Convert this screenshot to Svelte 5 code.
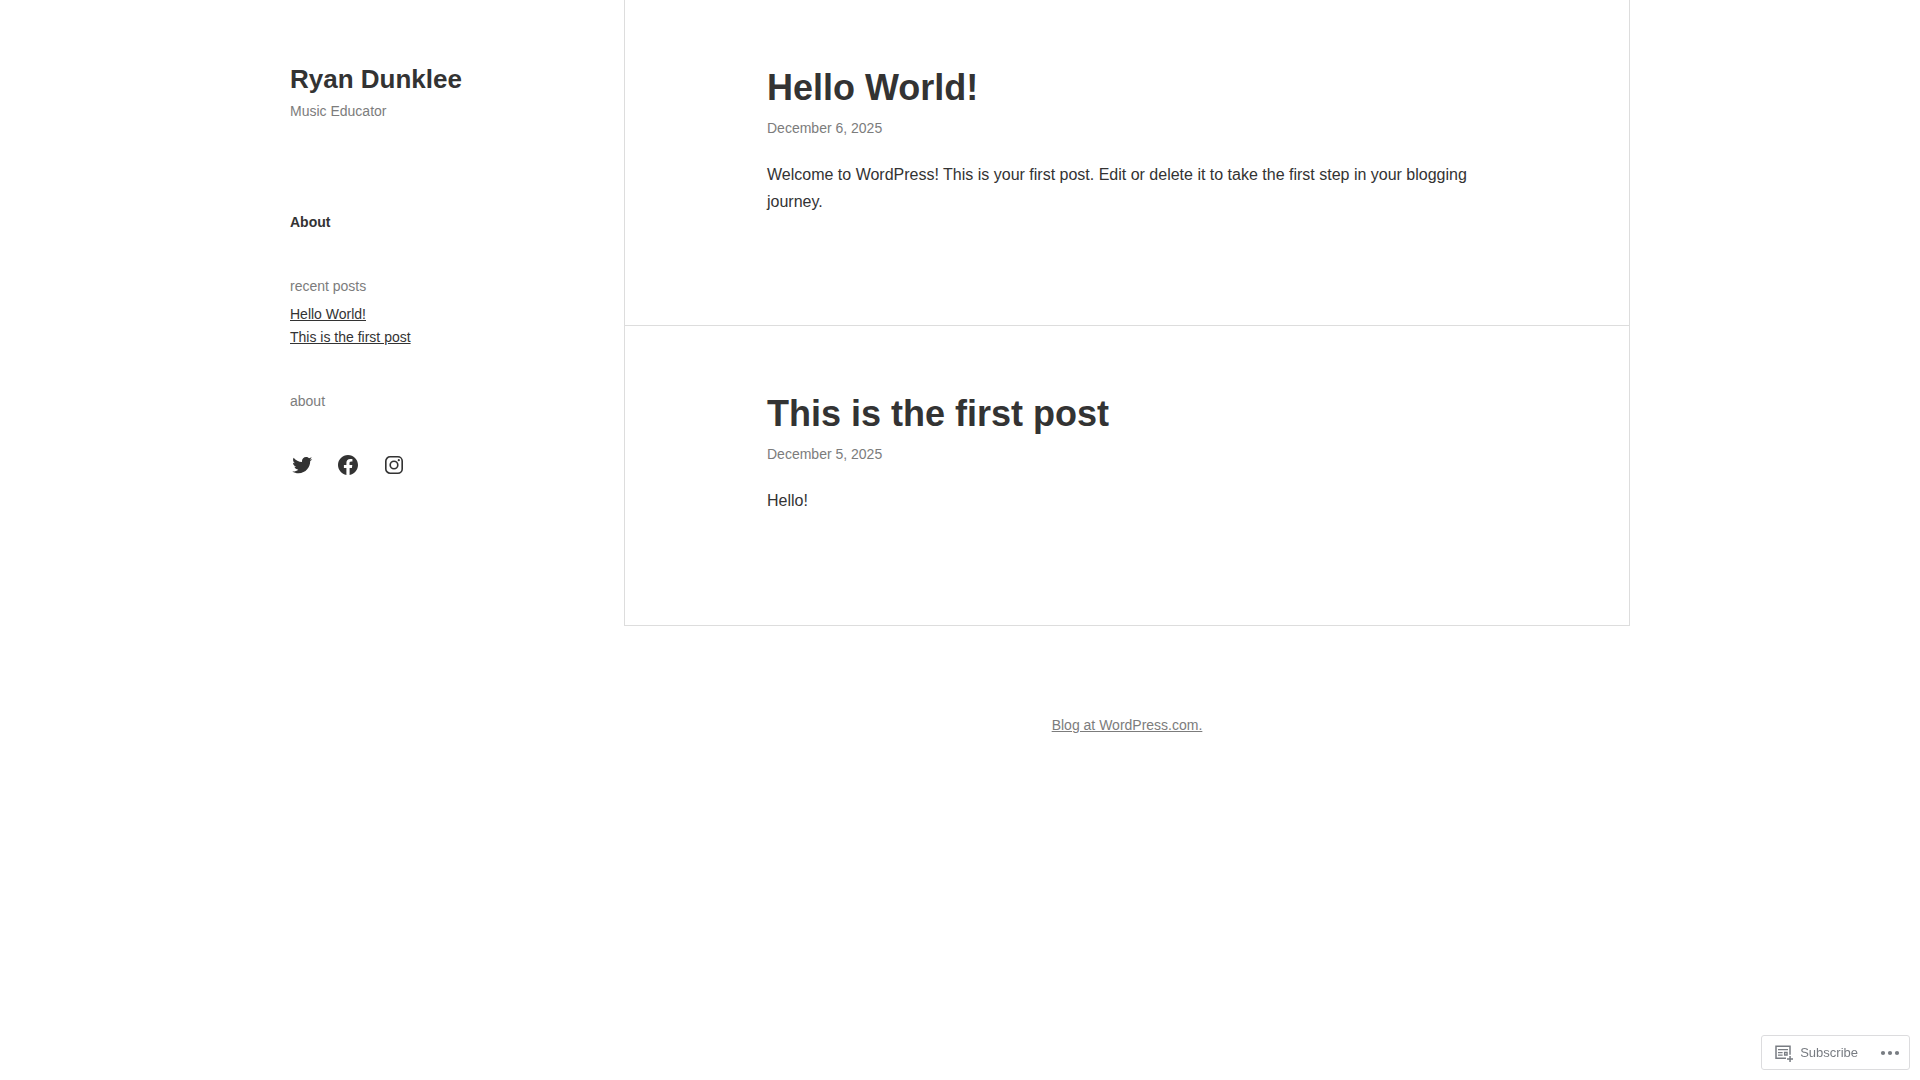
<script lang="ts">
  const posts = [
    {
      title: 'Hello World!',
      date: 'December 6, 2025',
      body: 'Welcome to WordPress! This is your first post. Edit or delete it to take the first step in your blogging journey.',
    },
    { title: 'This is the first post', date: 'December 5, 2025', body: 'Hello!' },
  ]
</script>

<div class="site">
  <aside class="sidebar">
    <header class="branding">
      <h1><a href="#home">Ryan Dunklee</a></h1>
      <p>Music Educator</p>
    </header>

    <nav class="menu" aria-label="Primary">
      <a href="#about">About</a>
    </nav>

    <section class="widget">
      <h2>recent posts</h2>
      <ul class="recent">
        {#each posts as post}
          <li><a href="#post">{post.title}</a></li>
        {/each}
      </ul>
    </section>

    <section class="widget">
      <h2>about</h2>
    </section>

    <ul class="social">
      <li>
        <a href="#twitter" aria-label="Twitter">
          <svg viewBox="0 0 24 24" width="24" height="24">
            <path d="M22.23,5.924c-0.736,0.326-1.527,0.547-2.357,0.646c0.847-0.508,1.498-1.312,1.804-2.27 c-0.793,0.47-1.671,0.812-2.606,0.996C18.324,4.498,17.257,4,16.077,4c-2.266,0-4.103,1.837-4.103,4.103 c0,0.322,0.036,0.635,0.106,0.935C8.67,8.867,5.647,7.234,3.623,4.751C3.27,5.357,3.067,6.062,3.067,6.814 c0,1.424,0.724,2.679,1.825,3.415c-0.673-0.021-1.305-0.206-1.859-0.513c0,0.017,0,0.034,0,0.052c0,1.988,1.414,3.647,3.292,4.023 c-0.344,0.094-0.707,0.144-1.081,0.144c-0.264,0-0.521-0.026-0.772-0.074c0.522,1.63,2.038,2.816,3.833,2.85 c-1.404,1.1-3.174,1.756-5.096,1.756c-0.331,0-0.658-0.019-0.979-0.057c1.816,1.164,3.973,1.843,6.29,1.843 c7.547,0,11.675-6.252,11.675-11.675c0-0.178-0.004-0.355-0.012-0.531C20.985,7.47,21.68,6.747,22.23,5.924z" />
          </svg>
        </a>
      </li>
      <li>
        <a href="#facebook" aria-label="Facebook">
          <svg viewBox="0 0 24 24" width="24" height="24">
            <path d="M12 2C6.5 2 2 6.5 2 12c0 5 3.7 9.1 8.4 9.9v-7H7.9V12h2.5V9.8c0-2.5 1.5-3.9 3.8-3.9 1.1 0 2.2.2 2.2.2v2.5h-1.3c-1.2 0-1.6.8-1.6 1.6V12h2.8l-.4 2.9h-2.3v7C18.3 21.1 22 17 22 12c0-5.5-4.5-10-10-10z" />
          </svg>
        </a>
      </li>
      <li>
        <a href="#instagram" aria-label="Instagram">
          <svg viewBox="0 0 24 24" width="24" height="24">
            <g fill="none" stroke="currentColor" stroke-width="1.62">
              <rect x="3.81" y="3.81" width="16.38" height="16.38" rx="4.3" />
              <circle cx="12" cy="12" r="3.8" />
            </g>
            <circle cx="16.8" cy="7.2" r="1.1" />
          </svg>
        </a>
      </li>
    </ul>
  </aside>

  <div class="content">
    <main>
      {#each posts as post}
        <article>
          <h2><a href="#post">{post.title}</a></h2>
          <time>{post.date}</time>
          <p>{post.body}</p>
        </article>
      {/each}
    </main>

    <footer>
      <a href="#wordpress">Blog at WordPress.com.</a>
    </footer>
  </div>
</div>

<div class="actionbar">
  <button type="button" class="subscribe">
    <svg viewBox="0 0 20 20" width="20" height="20">
      <path d="M12 15.25H2v-12h14v8.5" fill="none" stroke="currentColor" stroke-width="1.5" />
      <path d="M4 6h10v1.3H4zM4 8.9h4.6v1.3H4zM4 11.5h4.6v1.3H4z" />
      <path d="M10.6 9.5h2.5v2.5h-2.5z" fill="none" stroke="currentColor" stroke-width="1.3" />
      <path d="M15.3 13h1.5v2.3H19v1.5h-2.2V19h-1.5v-2.2H13v-1.5h2.3z" />
    </svg>
    Subscribe
  </button>
  <button type="button" class="more" aria-label="More">
    <svg viewBox="0 0 20 6" width="20" height="6">
      <circle cx="3" cy="3" r="2.1" />
      <circle cx="10" cy="3" r="2.1" />
      <circle cx="17" cy="3" r="2.1" />
    </svg>
  </button>
</div>

<style>
  :global(body) {
    background: #fff;
    color: #333;
    font-family: 'Liberation Sans', Arial, sans-serif;
    font-size: 14px;
    line-height: 24px;
  }

  h1,
  h2,
  p,
  ul {
    margin: 0;
    padding: 0;
  }

  ul {
    list-style: none;
  }

  a {
    color: inherit;
  }

  svg {
    display: block;
    fill: currentColor;
  }

  .site {
    display: grid;
    grid-template-columns: 334px 1fr;
    max-width: 1340px;
    margin: 0 auto;
  }

  .sidebar {
    display: flex;
    flex-direction: column;
    gap: 40px;
    padding-top: 63px;
  }

  .branding {
    padding-bottom: 47px;
  }

  .branding h1 {
    margin-bottom: 4px;
    font-size: 26px;
    line-height: 32px;
  }

  .branding p,
  .widget h2,
  time,
  footer {
    color: #7c7c7c;
  }

  .branding a,
  .menu a,
  article a {
    text-decoration: none;
  }

  .menu {
    font-weight: 700;
  }

  .widget h2 {
    font-size: 14px;
    font-weight: 400;
  }

  .recent {
    margin-top: 5px;
    line-height: 23px;
  }

  .social {
    display: flex;
    gap: 22px;
  }

  main {
    border: 1px solid #ddd;
    border-width: 0 1px;
  }

  article {
    box-sizing: border-box;
    min-height: 300px;
    padding: 66px 142px 110px;
    border-bottom: 1px solid #ddd;
  }

  article h2 {
    margin-bottom: 6px;
    font-size: 36px;
    line-height: 44px;
  }

  time {
    display: block;
    margin-bottom: 21px;
  }

  article p {
    font-size: 16px;
    line-height: 27px;
  }

  footer {
    padding: 87px 0;
    text-align: center;
  }

  .actionbar {
    position: fixed;
    right: 10px;
    bottom: 10px;
    display: flex;
    align-items: center;
    border: 1px solid #dcdcde;
    border-radius: 3px;
    background: #fff;
    color: #787c82;
  }

  .actionbar button {
    display: flex;
    align-items: center;
    border: 0;
    background: none;
    color: inherit;
    font: inherit;
    cursor: pointer;
  }

  .actionbar .subscribe {
    gap: 6px;
    padding: 5px 13px 5px 12px;
    font-size: 13px;
    line-height: 23px;
  }

  .actionbar .more {
    padding: 8px 9px;
  }

  @media (max-width: 1000px) {
    .site {
      grid-template-columns: 1fr;
      gap: 40px;
      padding: 0 20px;
    }

    article {
      padding: 40px 20px;
    }
  }
</style>
